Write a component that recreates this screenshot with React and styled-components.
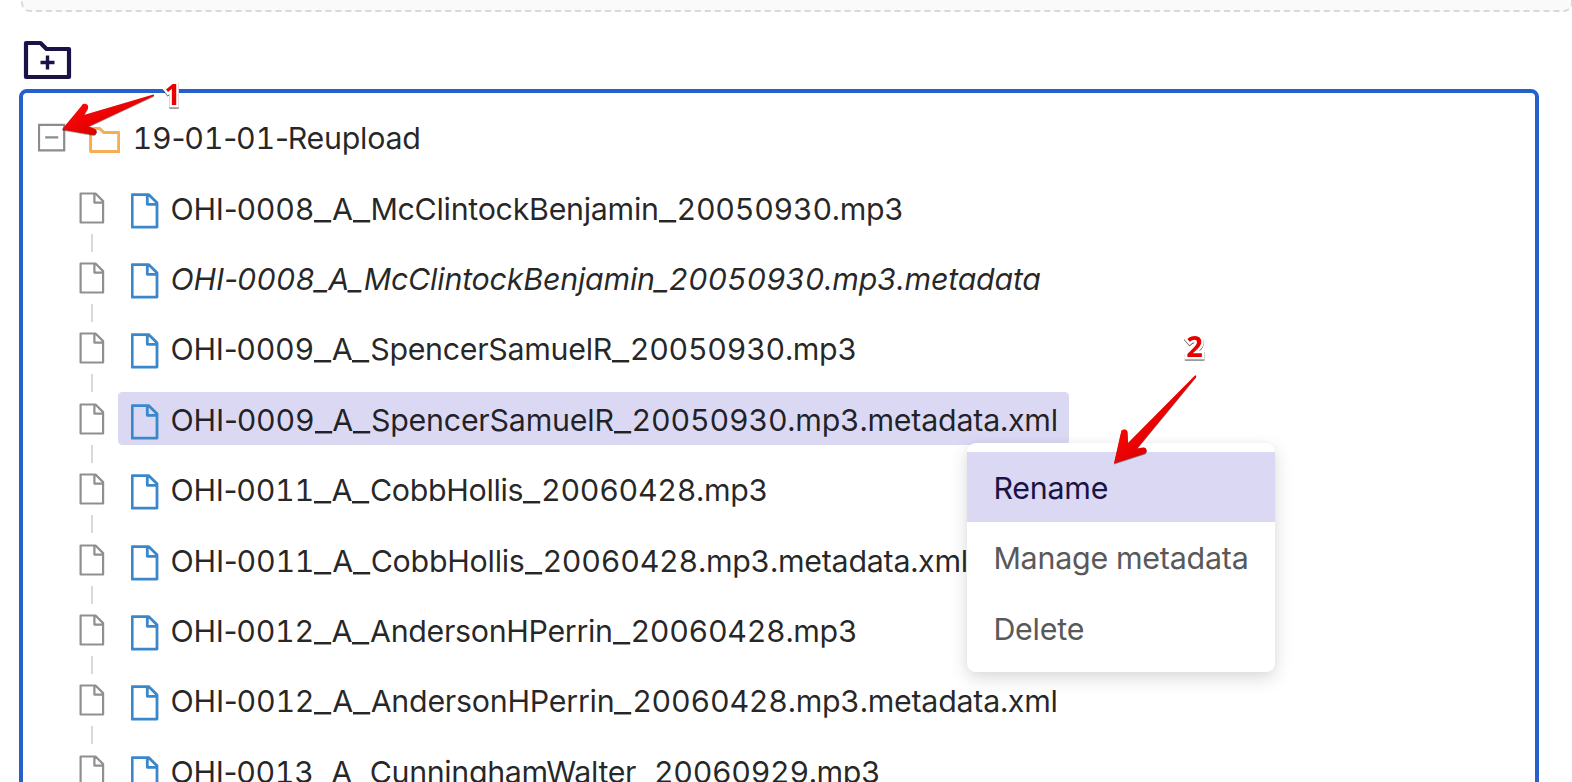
import React from "react";
import styled, { createGlobalStyle } from "styled-components";

const GlobalStyle = createGlobalStyle`
  *, *::before, *::after { box-sizing: border-box; }
  html, body { margin: 0; height: 100%; overflow: hidden; background: #fff; }
  body {
    font-family: Inter, "Liberation Sans", sans-serif;
    font-size: 30.4px;
    font-weight: 440;
    font-feature-settings: "tnum";
    color: rgba(0, 0, 0, 0.85);
  }
`;

const Page = styled.main`
  position: relative;
  display: flex;
  flex-direction: column;
  height: 782px;
  width: 1572px;
  overflow: hidden;
`;

const DropZone = styled.div`
  flex: none;
  width: 1552px;
  height: 42px;
  margin: -30px 0 0 21px;
  border: 2px dashed #d9d9d9;
  border-radius: 9px;
  background: #fafafa;
`;

const Toolbar = styled.div`
  flex: none;
  display: flex;
  height: 77px;
  padding: 28px 0 0 23px;
`;

const IconButton = styled.button`
  display: flex;
  width: 50px;
  height: 40px;
  padding: 0;
  border: 0;
  background: none;
`;

const Tree = styled.section`
  flex: none;
  width: 1520px;
  height: 760px;
  margin-left: 19px;
  padding: 17.2px 0 0 15px;
  border: 4px solid #2560cb;
  border-radius: 8px;
`;

const Row = styled.div`
  display: flex;
  align-items: flex-start;
  height: 70.4px;
  padding-left: ${(p) => (p.$nested ? "40px" : "0")};
`;

const Switcher = styled.span`
  flex: none;
  width: ${(p) => (p.$folder ? "38px" : "40px")};
  height: 70.4px;
`;

const Node = styled.span`
  display: flex;
  align-items: flex-start;
  height: 52.8px;
  padding: 0 11px 0 12.6px;
  border-radius: 4.4px;
  background: ${(p) => (p.$selected ? "#dbd8f3" : "transparent")};
`;

const Label = styled.span`
  margin-left: ${(p) => (p.$folder ? "13px" : "12px")};
  line-height: 56px;
  white-space: nowrap;
  font-style: ${(p) => (p.$italic ? "italic" : "normal")};
  letter-spacing: ${(p) => p.$tracking || 0}px;
`;

const Hyphen = styled.span`
  font-feature-settings: normal;
  margin-right: -1px;
`;

const Underscore = styled.span`
  display: inline-block;
  width: 17.8px;
  line-height: 1;
  transform: scaleX(1.24);
  transform-origin: left;
`;

const Menu = styled.ul`
  position: absolute;
  left: 967px;
  top: 443px;
  width: 308px;
  height: 229px;
  margin: 0;
  padding: 8.8px 0;
  list-style: none;
  border-radius: 8.8px;
  background: #fff;
  box-shadow: 0 6px 18px rgba(0, 0, 0, 0.15), 0 0 6px rgba(0, 0, 0, 0.03);
`;

const MenuItem = styled.li`
  height: 70.4px;
  padding-left: 26.4px;
  line-height: 73px;
  white-space: nowrap;
  color: ${(p) => (p.$active ? "#1a1446" : "#595959")};
  background: ${(p) => (p.$active ? "#dbd8f3" : "transparent")};
  letter-spacing: -0.22px;
`;

const Annotations = styled.svg`
  position: absolute;
  left: 0;
  top: 0;
`;

const Marker = styled.span`
  position: absolute;
  left: ${(p) => p.$x}px;
  top: ${(p) => p.$y}px;
  font: 700 29px/30px "Open Sans", sans-serif;
  color: #e80000;
  paint-order: stroke fill;
  -webkit-text-stroke: 5px #fff;
  filter: drop-shadow(0 1px 0.7px rgba(0, 0, 0, 0.7));
`;

const files = [
  { name: "OHI-0008_A_McClintockBenjamin_20050930.mp3", tracking: -0.29 },
  { name: "OHI-0008_A_McClintockBenjamin_20050930.mp3.metadata", italic: true, tracking: -0.22 },
  { name: "OHI-0009_A_SpencerSamuelR_20050930.mp3", tracking: -0.31 },
  { name: "OHI-0009_A_SpencerSamuelR_20050930.mp3.metadata.xml", selected: true, tracking: -0.23 },
  { name: "OHI-0011_A_CobbHollis_20060428.mp3", tracking: -0.33 },
  { name: "OHI-0011_A_CobbHollis_20060428.mp3.metadata.xml", tracking: -0.26 },
  { name: "OHI-0012_A_AndersonHPerrin_20060428.mp3", tracking: -0.33 },
  { name: "OHI-0012_A_AndersonHPerrin_20060428.mp3.metadata.xml", tracking: -0.26 },
  { name: "OHI-0013_A_CunninghamWalter_20060929.mp3", tracking: -0.36 },
];

const renderName = (name, italic) =>
  name.split(/([-_])/).map((part, i) => {
    if (part === "-") return <Hyphen key={i}>-</Hyphen>;
    if (part === "_" && !italic) return <Underscore key={i}>_</Underscore>;
    return part;
  });

const FolderAddIcon = () => (
  <svg width="50" height="40" viewBox="0 0 50 40" fill="none" stroke="#1a1446">
    <path d="M3 15V3H17.5L23.5 9H46V37H3Z" strokeWidth="4.2" strokeLinejoin="round" />
    <path d="M24.5 15.5V29.5M17.5 22.5H31.5" strokeWidth="3.4" />
  </svg>
);

const CollapseIcon = () => (
  <svg width="30" height="54" viewBox="0 0 30 54" fill="none" stroke="#8c8c8c" strokeWidth="2.2">
    <path d="M1 14.8H26.2V40.4H1ZM7.2 27.4H20.2" />
  </svg>
);

const FolderIcon = () => (
  <svg width="31" height="44" viewBox="0 0 31 44" fill="none" stroke="#f5ae55" strokeWidth="3" strokeLinejoin="round">
    <path d="M1.6 18.4H10.5L15 22.6H29.7V41.6H1.6Z" />
  </svg>
);

const LeafIcon = () => (
  <svg width="27" height="72" viewBox="0 0 27 72" fill="none">
    <path d="M2.6 12.5H17.5L25.1 20.1V41.5H2.6Z M16.4 12.5V21.6H25.1" stroke="#8f8f8f" strokeWidth="2.2" strokeLinejoin="round" />
    <path d="M14 53V71" stroke="#d9d9d9" strokeWidth="2" />
  </svg>
);

const FileIcon = () => (
  <svg width="28" height="50" viewBox="0 0 28 50" fill="none" stroke="#3a87cb" strokeWidth="2.8" strokeLinejoin="round">
    <path d="M1.2 13.6H17.6L26 21.8V46.1H1.2Z M16.3 13.6V23.3H26" />
  </svg>
);

export default function App() {
  return (
    <>
      <GlobalStyle />
      <Page>
        <DropZone />
        <Toolbar>
          <IconButton aria-label="New folder"><FolderAddIcon /></IconButton>
        </Toolbar>
        <Tree>
          <Row>
            <Switcher $folder><CollapseIcon /></Switcher>
            <Node><FolderIcon /><Label $folder $tracking={-0.24}>{renderName("19-01-01-Reupload")}</Label></Node>
          </Row>
          {files.map((f) => (
            <Row key={f.name} $nested>
              <Switcher><LeafIcon /></Switcher>
              <Node $selected={f.selected}>
                <FileIcon />
                <Label $italic={f.italic} $tracking={f.tracking}>{renderName(f.name, f.italic)}</Label>
              </Node>
            </Row>
          ))}
        </Tree>
        <Menu>
          <MenuItem $active>Rename</MenuItem>
          <MenuItem>Manage metadata</MenuItem>
          <MenuItem>Delete</MenuItem>
        </Menu>
        <Annotations width="1572" height="782" viewBox="0 0 1572 782">
          <defs>
            <linearGradient id="red" x1="0" y1="0" x2="1" y2="1">
              <stop offset="0.3" stopColor="#fb0505" />
              <stop offset="0.7" stopColor="#d90000" />
            </linearGradient>
            <filter id="shade" x="-10%" y="-10%" width="120%" height="120%" colorInterpolationFilters="sRGB">
              <feDropShadow dx="0" dy="0.6" stdDeviation="0.6" floodColor="#300" floodOpacity="0.7" />
            </filter>
          </defs>
          <g fill="url(#red)" filter="url(#shade)">
            <path d="M62 129.5L81.5 106A3.2 3.2 0 0 1 87.8 108.5L84 115L153.5 94.5Q155 95.5 153.5 96L88.5 126.5L95 129A3.2 3.2 0 0 1 94 135Z" />
            <path d="M1114 463.5L1121 432.5A3.2 3.2 0 0 1 1127.5 433L1128 443L1195 375.5Q1197 375 1196 377L1137 448.5L1143.5 447.5A3.2 3.2 0 0 1 1145 453.5Z" />
          </g>
        </Annotations>
        <Marker $x={164.3} $y={79}>1</Marker>
        <Marker $x={1186.3} $y={331}>2</Marker>
      </Page>
    </>
  );
}
